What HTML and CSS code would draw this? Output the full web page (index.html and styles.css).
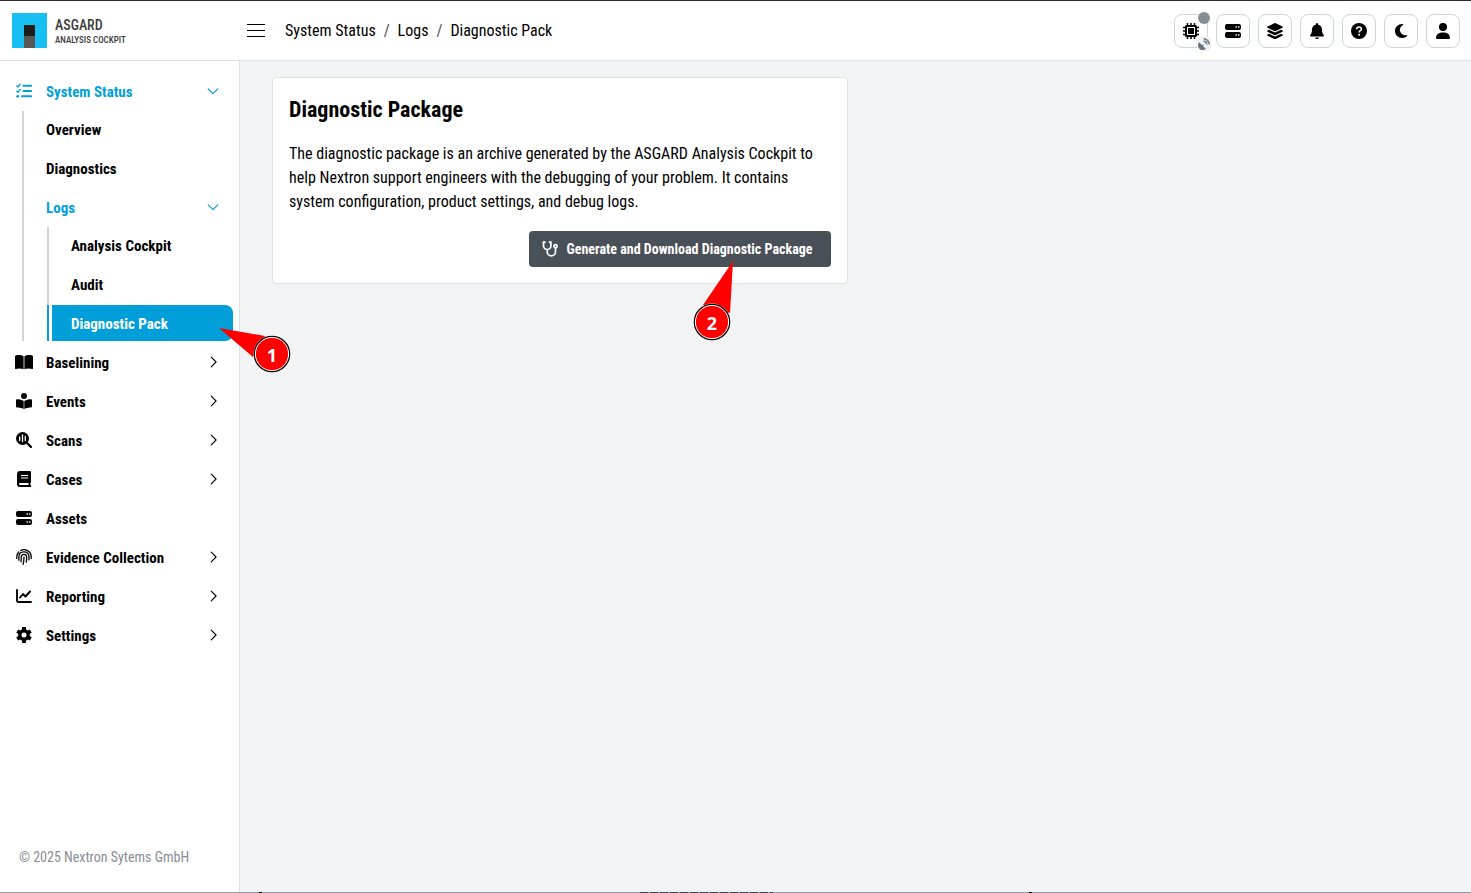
FILE: index.html
```html
<!DOCTYPE html>
<html lang="en">
<head>
<meta charset="utf-8">
<meta name="viewport" content="width=device-width, initial-scale=1">
<title>Diagnostic Pack - ASGARD Analysis Cockpit</title>
<link rel="stylesheet" href="styles.css">
</head>
<body>
<svg class="sprite" aria-hidden="true">
  <symbol id="chev-right" viewBox="0 0 16 16"><path d="M6 2.500 11.500 8 6 13.500" fill="none" stroke="currentColor" stroke-width="1.300" stroke-linecap="round" stroke-linejoin="round"/></symbol>
  <symbol id="chev-down" viewBox="0 0 16 16"><path d="M2.500 5.500 8 11l5.500-5.500" fill="none" stroke="currentColor" stroke-width="1.300" stroke-linecap="round" stroke-linejoin="round"/></symbol>
  <symbol id="server" viewBox="0 0 16 16"><path fill="currentColor" fill-rule="evenodd" d="M2 1h12a2 2 0 0 1 2 2v2a2 2 0 0 1-2 2H2a2 2 0 0 1-2-2V3a2 2 0 0 1 2-2zm8.500 2.300v1.400h1.400V3.300zm2.500 0v1.400h1.400V3.300zM2 9h12a2 2 0 0 1 2 2v2a2 2 0 0 1-2 2H2a2 2 0 0 1-2-2v-2a2 2 0 0 1 2-2zm8.500 2.300v1.400h1.400v-1.400zm2.500 0v1.400h1.400v-1.400z"/></symbol>
</svg>
<div class="app">
  <header class="topbar">
    <a class="brand" href="#">
      <svg class="brand-mark" viewBox="0 0 35 35" aria-hidden="true"><path fill="#17bff2" d="M0 0h35v35H0z"/><path fill="#1d1d1b" d="M12 12h11v11H12z"/><path fill="#575756" d="M12 23h11v12H12z"/></svg>
      <span class="brand-text"><span class="brand-name">ASGARD</span><span class="brand-product">ANALYSIS COCKPIT</span></span>
    </a>
    <button class="menu-toggle" type="button" aria-label="Toggle menu"><svg viewBox="0 0 18 14" aria-hidden="true"><path d="M0 .5h18M0 6.500h18M0 12.500h18" stroke="#000"/></svg></button>
    <nav class="crumbs" aria-label="Breadcrumb"><a href="#">System Status</a><span class="sep">/</span><a href="#">Logs</a><span class="sep">/</span><a href="#">Diagnostic Pack</a></nav>
    <div class="actions">
      <button class="tool" type="button" aria-label="System load">
        <svg viewBox="0 0 16 16" aria-hidden="true"><path fill="none" stroke="currentColor" stroke-width="1.500" d="M4.500 0v3M8 0v3M11.500 0v3M4.500 13v3M8 13v3M11.500 13v3M0 4.500h3M0 8h3M0 11.500h3M13 4.500h3M13 8h3M13 11.500h3"/><path fill="currentColor" fill-rule="evenodd" d="M3.500 2h9A1.500 1.500 0 0 1 14 3.500v9a1.500 1.500 0 0 1-1.500 1.500h-9A1.500 1.500 0 0 1 2 12.500v-9A1.500 1.500 0 0 1 3.500 2zm.5 2v8h8V4zm1 1h6v6H5z"/></svg>
        <span class="dot"></span>
        <span class="link-badge"><svg viewBox="0 0 12 12" aria-hidden="true"><path fill="#6c757d" d="M1.300 4.300 4.200 7.200l1-1 .7.7-1 1 2.900 2.900A4.600 4.600 0 0 1 1.300 4.300z"/><path fill="none" stroke="#6c757d" stroke-width="1.500" d="M5.500 3.300a3.300 3.300 0 0 1 3.300 3.300M5.500.8a5.800 5.800 0 0 1 5.800 5.800"/></svg></span>
      </button>
      <button class="tool" type="button" aria-label="Servers"><svg viewBox="0 0 16 16" aria-hidden="true"><use href="#server"/></svg></button>
      <button class="tool" type="button" aria-label="Layers"><svg viewBox="0 0 16 16" fill="currentColor" aria-hidden="true"><path d="M7.300.3a1.500 1.500 0 0 1 1.400 0l6.800 3.300a.6.6 0 0 1 0 1.100L8.700 8a1.500 1.500 0 0 1-1.400 0L.5 4.700a.6.6 0 0 1 0-1.100z"/><path d="m2.100 6.800 4.600 2.300a3 3 0 0 0 2.600 0l4.600-2.300 1.600.8a.6.600 0 0 1 0 1.100L8.700 12a1.500 1.500 0 0 1-1.400 0L.5 8.700a.6.6 0 0 1 0-1.100z"/><path d="m2.100 10.800 4.600 2.300a3 3 0 0 0 2.600 0l4.600-2.300 1.600.8a.6.6 0 0 1 0 1.100l-6.800 3.200a1.500 1.500 0 0 1-1.400 0L.5 12.700a.6.6 0 0 1 0-1.100z"/></svg></button>
      <button class="tool" type="button" aria-label="Notifications"><svg viewBox="0 0 16 16" fill="currentColor" aria-hidden="true"><path d="M8 0a1 1 0 0 1 1 1v.6c2.300.5 4 2.500 4 4.900 0 3 .7 4.500 1.700 5.500.6.6.2 1.500-.6 1.500H1.900c-.8 0-1.200-.9-.6-1.500 1-1 1.700-2.500 1.700-5.500 0-2.400 1.700-4.400 4-4.900V1a1 1 0 0 1 1-1zM6.200 14.500h3.600a1.800 1.600 0 0 1-3.600 0z"/></svg></button>
      <button class="tool" type="button" aria-label="Help"><svg viewBox="0 0 16 16" aria-hidden="true"><circle cx="8" cy="8" r="8" fill="currentColor"/><path d="M5.700 6.200C5.700 3.200 10.400 3.300 10.400 6c0 1.700-2.300 1.700-2.300 3.500" fill="none" stroke="#fff" stroke-width="1.600"/><circle cx="8.100" cy="11.700" r="1.050" fill="#fff"/></svg></button>
      <button class="tool" type="button" aria-label="Dark mode"><svg viewBox="0 0 16 16" fill="currentColor" aria-hidden="true"><path d="M9.200 1C5.200 1 2 4.100 2 8s3.200 7 7.200 7c1.900 0 3.700-.8 5-2 .3-.4 0-.9-.5-.8-3.700.6-6.800-2-6.800-5.400 0-2 1.200-3.900 3-4.900.5-.3.400-.8-.1-.9z"/></svg></button>
      <button class="tool" type="button" aria-label="Account"><svg viewBox="0 0 16 16" fill="currentColor" aria-hidden="true"><circle cx="8" cy="4" r="4"/><path d="M6.500 9.500h3a5.500 5.500 0 0 1 5.500 5.500 1 1 0 0 1-1 1H2a1 1 0 0 1-1-1 5.500 5.500 0 0 1 5.500-5.500z"/></svg></button>
    </div>
  </header>
  <div class="body">
    <aside class="sidebar">
      <nav aria-label="Main">
        <ul class="nav">
          <li><a class="item open" href="#"><svg class="ico" viewBox="0 0 16 16" fill="none" stroke="currentColor" aria-hidden="true"><path stroke-width="1.400" d="m.5 2.500 1.400 1.400L4.500.9M.5 7.700l1.400 1.400 2.600-3"/><path stroke-width="1.900" stroke-linecap="round" d="M7.500 2.700h7.600M7.500 8h7.600M6 13.300h9.100"/><circle cx="1.700" cy="13.300" r="1.400" fill="currentColor" stroke="none"/></svg>System Status<svg class="chev" aria-hidden="true"><use href="#chev-down"/></svg></a>
            <ul class="sub">
              <li><a class="item" href="#">Overview</a></li>
              <li><a class="item" href="#">Diagnostics</a></li>
              <li><a class="item open" href="#">Logs<svg class="chev" aria-hidden="true"><use href="#chev-down"/></svg></a>
                <ul class="sub deep">
                  <li><a class="item" href="#">Analysis Cockpit</a></li>
                  <li><a class="item" href="#">Audit</a></li>
                  <li class="current"><a class="item" href="#" aria-current="page">Diagnostic Pack</a></li>
                </ul>
              </li>
            </ul>
          </li>
          <li><a class="item" href="#"><svg class="ico" viewBox="0 0 18 16" fill="currentColor" aria-hidden="true"><path d="M8.600 2.600v12.700C6.500 14.200 3.500 14.200.9 14.900a.7.7 0 0 1-.9-.7V2.300c0-.5.300-.8.700-.9 2.700-.7 5.900-.5 7.900 1.200zM9.400 2.600v12.700c2.100-1.100 5.100-1.100 7.700-.4a.7.7 0 0 0 .9-.7V2.300c0-.5-.3-.8-.7-.9-2.700-.7-5.900-.5-7.900 1.200z"/></svg>Baselining<svg class="chev" aria-hidden="true"><use href="#chev-right"/></svg></a></li>
          <li><a class="item" href="#"><svg class="ico" viewBox="0 0 16 16" fill="currentColor" aria-hidden="true"><circle cx="8" cy="3" r="3"/><path d="M7.700 8.100V16c-2-1.200-4.200-1.500-6.700-1.600a1 1 0 0 1-1-1V7.200a1 1 0 0 1 1-1c2.500 0 4.900.6 6.700 1.900zM8.300 8.100V16c2-1.200 4.200-1.500 6.700-1.600a1 1 0 0 0 1-1V7.200a1 1 0 0 0-1-1c-2.500 0-4.900.6-6.700 1.900z"/></svg>Events<svg class="chev" aria-hidden="true"><use href="#chev-right"/></svg></a></li>
          <li><a class="item" href="#"><svg class="ico" viewBox="0 0 16 16" aria-hidden="true"><circle cx="6.500" cy="6.500" r="6.500" fill="currentColor"/><path d="m10.500 10.500 4.400 4.400" stroke="currentColor" stroke-width="2.200" stroke-linecap="round"/><path d="M3.700 5v3.500M6.500 3v6.500M9.300 4.500v4" stroke="#fff" stroke-width="1.300" stroke-linecap="round"/></svg>Scans<svg class="chev" aria-hidden="true"><use href="#chev-right"/></svg></a></li>
          <li><a class="item" href="#"><svg class="ico" viewBox="0 0 16 16" aria-hidden="true"><path fill="currentColor" fill-rule="evenodd" d="M4 0h10a1 1 0 0 1 1 1v10a1 1 0 0 1-.7.950V14a1 1 0 0 1 0 2H4a3 3 0 0 1-3-3V3a3 3 0 0 1 3-3zm0 12a1 1 0 0 0 0 2h8.500v-2z"/><path d="M5 4.500h7M5 7h7" stroke="#fff"/></svg>Cases<svg class="chev" aria-hidden="true"><use href="#chev-right"/></svg></a></li>
          <li><a class="item" href="#"><svg class="ico" aria-hidden="true" viewBox="0 0 16 16"><use href="#server"/></svg>Assets</a></li>
          <li><a class="item" href="#"><svg class="ico" viewBox="0 0 16 16" fill="none" stroke="currentColor" stroke-width="1.300" stroke-linecap="round" aria-hidden="true"><path d="M.8 9.500V7.800C.8 5.800 1.500 4.200 2.700 3M4.600 1.500C9 -.6 15.200 2 15.200 7.800v1.700M2.900 11.300V7.800C2.900 1.500 12.200 1.200 13 7.300v3.500M5 12.800c.3-1.300.2-2.900.2-4.600 0-3.700 5.400-3.800 5.500 0 0 1.800 0 3.300-.4 5M7.100 15.400c.6-2 .9-4.500.9-7.300"/></svg>Evidence Collection<svg class="chev" aria-hidden="true"><use href="#chev-right"/></svg></a></li>
          <li><a class="item" href="#"><svg class="ico" viewBox="0 0 16 16" fill="none" stroke="currentColor" stroke-width="1.900" stroke-linecap="round" stroke-linejoin="round" aria-hidden="true"><path d="M1 2v10.500A1.500 1.500 0 0 0 2.500 14H15M4 9.500 7 6l2.500 2.500L14 3.500"/></svg>Reporting<svg class="chev" aria-hidden="true"><use href="#chev-right"/></svg></a></li>
          <li><a class="item" href="#"><svg class="ico" viewBox="0 0 16 16" aria-hidden="true"><circle cx="8" cy="8" r="4.200" fill="none" stroke="currentColor" stroke-width="3.400"/><path d="M8 .1v3M8 12.900v3M1.200 4.050l2.600 1.500M12.200 10.450l2.600 1.500M14.800 4.050l-2.600 1.500M3.800 10.450l-2.600 1.500" stroke="currentColor" stroke-width="3.800"/></svg>Settings<svg class="chev" aria-hidden="true"><use href="#chev-right"/></svg></a></li>
        </ul>
      </nav>
      <p class="copyright">© 2025 Nextron Sytems GmbH</p>
    </aside>
    <main class="content">
      <section class="card">
        <h1>Diagnostic Package</h1>
        <p>The diagnostic package is an archive generated by the ASGARD Analysis Cockpit to help Nextron support engineers with the debugging of your problem. It contains system configuration, product settings, and debug logs.</p>
        <button class="generate" type="button"><svg viewBox="0 0 16 16" fill="none" stroke="currentColor" stroke-width="1.700" stroke-linecap="round" aria-hidden="true"><path d="M3 1.200H1.500v3.600a3.700 3.700 0 0 0 7.400 0V1.200H7.500M5.200 8.500v2.300a4 4 0 0 0 8.300 0V7"/><circle cx="13.500" cy="5.200" r="1.600"/></svg>Generate and Download Diagnostic Package</button>
      </section>
    </main>
  </div>
  <div class="edge"></div>
  <svg class="callout first" viewBox="0 0 76 50" role="img" aria-label="Step 1"><path fill="red" d="M1 3 47 11 35 32z"/><circle cx="54" cy="29" r="18.500" fill="#fff"/><circle cx="54" cy="29" r="17.600" fill="red" stroke="#000" stroke-width="1.400"/><circle cx="54" cy="29" r="16.600" fill="none" stroke="#fff"/><text x="54" y="37" text-anchor="middle">1</text></svg>
  <svg class="callout second" viewBox="0 0 44 82" role="img" aria-label="Step 2"><path fill="red" d="M41 1 11 45l27 8z"/><circle cx="20" cy="62" r="18.500" fill="#fff"/><circle cx="20" cy="62" r="17.600" fill="red" stroke="#000" stroke-width="1.400"/><circle cx="20" cy="62" r="16.600" fill="none" stroke="#fff"/><text x="20" y="70" text-anchor="middle">2</text></svg>
</div>
</body>
</html>
```
FILE: styles.css
```css
* { box-sizing: border-box; }
body {
  margin: 0;
  font: 16px/24px "Roboto Condensed", "Liberation Sans Narrow", Roboto, sans-serif;
  color: #000;
  background: #f1f3f5;
}
a { color: inherit; text-decoration: none; }
button { font: inherit; color: inherit; cursor: pointer; }
ul { margin: 0; padding: 0; list-style: none; }
.sprite { position: absolute; width: 0; height: 0; }
.app { position: relative; min-height: 100vh; display: flex; flex-direction: column; }

.topbar {
  display: flex;
  align-items: center;
  height: 61px;
  padding-right: 11px;
  background: #fff;
  border-top: 1px solid #2e2d33;
  border-bottom: 1px solid #dee2e6;
}
.brand { display: flex; align-items: center; gap: 8px; width: 240px; padding-left: 12px; }
.brand-mark { width: 35px; height: 35px; }
.brand-text { display: flex; flex-direction: column; color: #3c3c3b; }
.brand-name { font-size: 14px; font-weight: 500; line-height: 18px; }
.brand-product { font-size: 9px; font-weight: 500; line-height: 12px; }
.menu-toggle { display: flex; padding: 7px; border: 0; background: none; }
.menu-toggle svg { width: 18px; height: 14px; }
.crumbs { display: flex; gap: 8px; margin-left: 13px; }
.sep { color: #495057; }
.actions { display: flex; gap: 8px; margin-left: auto; }
.tool {
  position: relative;
  display: flex;
  align-items: center;
  justify-content: center;
  width: 34px;
  height: 34px;
  padding: 0;
  background: #fff;
  border: 1px solid #ced4da;
  border-radius: 8px;
}
.tool svg { width: 16px; height: 16px; }
.dot { position: absolute; top: -3px; right: -3px; width: 12px; height: 12px; border-radius: 50%; background: #868e96; }
.link-badge {
  position: absolute;
  right: -5px;
  bottom: -5px;
  display: flex;
  align-items: center;
  justify-content: center;
  width: 16px;
  height: 16px;
  border-radius: 50%;
  background: #f1f3f5;
}
.tool .link-badge svg { width: 12px; height: 12px; }

.body { flex: 1; display: flex; }
.sidebar {
  display: flex;
  flex-direction: column;
  justify-content: space-between;
  flex: none;
  width: 240px;
  padding-top: 12px;
  background: #fff;
  border-right: 1px solid #dee2e6;
}
.nav, .sub { display: flex; flex-direction: column; gap: 3px; }
.item {
  display: flex;
  align-items: center;
  height: 36px;
  padding: 2px 19px 0 15px;
  font-size: 15px;
  font-weight: 700;
}
.open { color: #009fda; }
.ico { width: 18px; height: 16px; margin: 0 13px 2px 0; }
.chev { width: 14px; height: 14px; margin: 0 0 2px auto; }
.sub { position: relative; margin: 2px 0 0 22px; border-left: 2px solid #ced4da; }
.sub .item { padding-left: 22px; }
.deep { margin-left: 23px; }
.current { margin-left: -2px; padding-left: 3px; border-left: 2px solid #009fda; }
.current .item { margin-right: 6px; padding-left: 19px; color: #fff; background: #009fda; border-radius: 0 8px 8px 0; }
.copyright { margin: 0; padding: 0 19px 23px; font-size: 14px; color: #868e96; }

.content {
  flex: 1;
  display: grid;
  grid-template-columns: 1fr 1fr;
  align-items: start;
  gap: 16px;
  padding: 16px 32px;
}
.card { display: flex; flex-direction: column; padding: 16px; background: #fff; border: 1px solid #dee2e6; border-radius: 4px; }
.card h1 { margin: 0 0 16px; font-size: 22px; line-height: 32px; }
.card p { margin: 0 0 17px; line-height: 24px; }
.generate {
  display: flex;
  align-items: center;
  align-self: flex-end;
  gap: 8px;
  height: 36px;
  padding: 0 18px 0 13px;
  font-size: 14px;
  font-weight: 700;
  color: #fff;
  background: #495057;
  border: 0;
  border-radius: 4px;
}
.generate svg { width: 16px; height: 16px; }
.edge {
  height: 1px;
  background:
    linear-gradient(#000, #000) 259px 0 / 3px 1px no-repeat,
    linear-gradient(#000, #000) 1029px 0 / 3px 1px no-repeat,
    repeating-linear-gradient(90deg, #444 0 8px, #999 8px 10px) 640px 0 / 133px 1px no-repeat,
    #999;
}
.callout { position: absolute; font: 700 18px "Noto Sans", "Open Sans", sans-serif; }
.callout text { fill: #fff; }
.first { left: 218px; top: 325px; width: 76px; height: 50px; }
.second { left: 692px; top: 260px; width: 44px; height: 82px; }
```
